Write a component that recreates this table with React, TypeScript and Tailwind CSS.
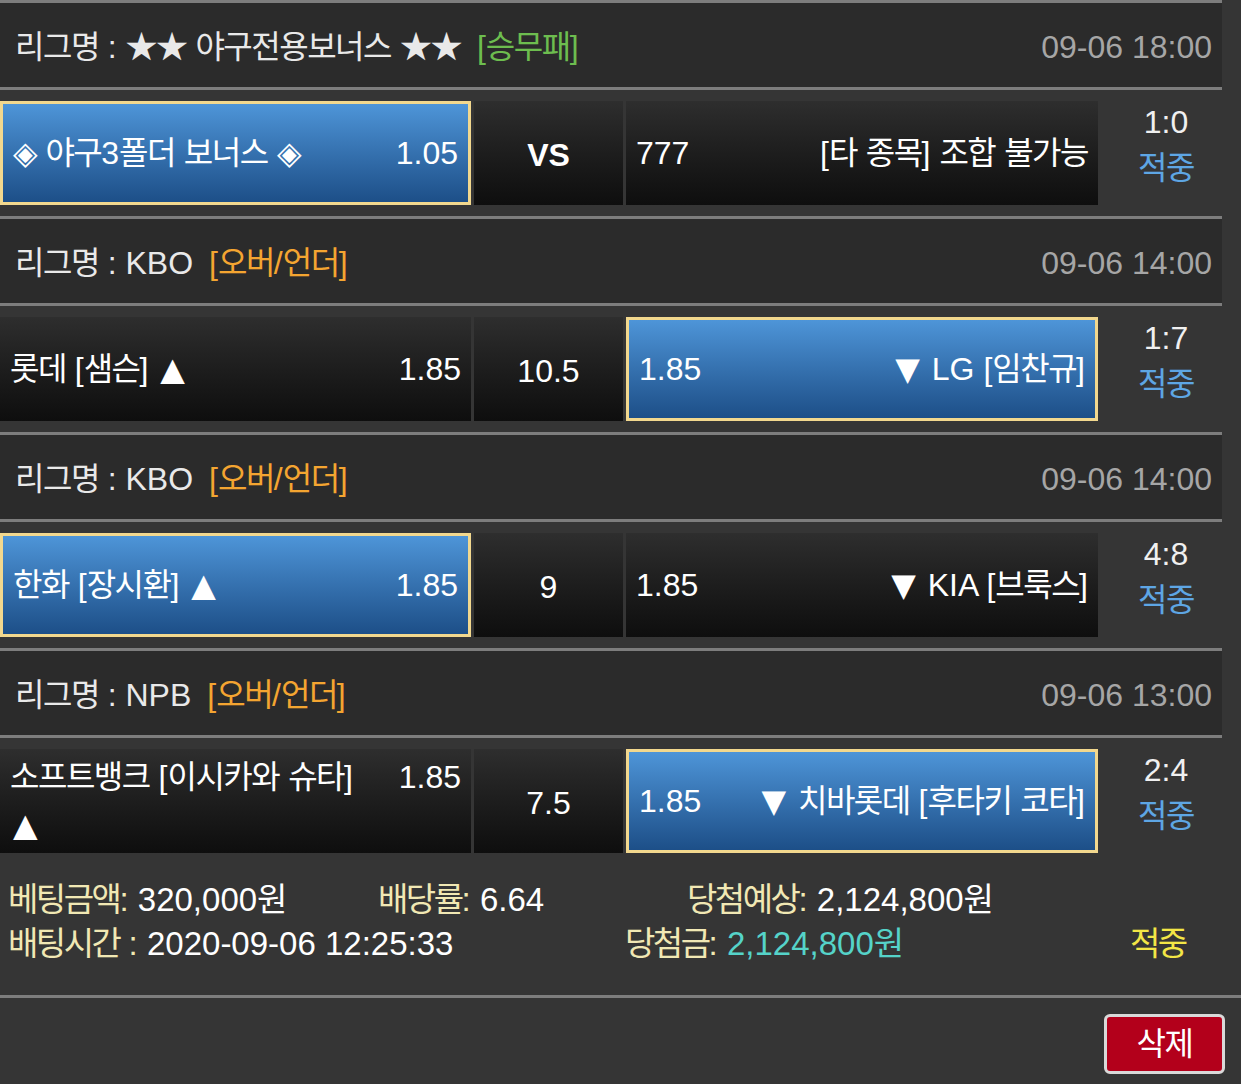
import React from "react";

const SPLIT = /([\uAC00-\uD7A3★◈]+|[▲▼])/;
const HANGUL = /^[\uAC00-\uD7A3★◈]+$/;
const TRI = /^[▲▼]$/;

function K({ t, f = false }: { t: string; f?: boolean }) {
  const parts = t.split(SPLIT);
  return (
    <>
      {parts.map((p, i) =>
        HANGUL.test(p) ? (
          <span key={i} className={f ? "tracking-[-2.5px]" : "tracking-[-1.5px]"}>
            {p}
          </span>
        ) : TRI.test(p) ? (
          <span key={i} className="px-[3px] font-['DejaVu_Sans',sans-serif]">
            {p}
          </span>
        ) : (
          <React.Fragment key={i}>{p}</React.Fragment>
        )
      )}
    </>
  );
}

type Side = { name: string; name2?: string; odds: string; selected?: boolean };
type Match = {
  league: string;
  tag: string;
  tagClass: string;
  tagGap: string;
  date: string;
  left: Side;
  mid: string;
  midBold?: boolean;
  right: Side;
  score: string;
};

const matches: Match[] = [
  {
    league: "리그명 : ★★ 야구전용보너스 ★★",
    tag: "[승무패]",
    tagClass: "text-[#6dbd4f]",
    tagGap: "ml-[16px]",
    date: "09-06 18:00",
    left: { name: "◈ 야구3폴더 보너스 ◈", odds: "1.05", selected: true },
    mid: "VS",
    midBold: true,
    right: { odds: "777", name: "[타 종목] 조합 불가능" },
    score: "1:0",
  },
  {
    league: "리그명 : KBO",
    tag: "[오버/언더]",
    tagClass: "text-[#f4a531]",
    tagGap: "ml-[16px]",
    date: "09-06 14:00",
    left: { name: "롯데 [샘슨] ▲", odds: "1.85" },
    mid: "10.5",
    right: { odds: "1.85", name: "▼ LG [임찬규]", selected: true },
    score: "1:7",
  },
  {
    league: "리그명 : KBO",
    tag: "[오버/언더]",
    tagClass: "text-[#f4a531]",
    tagGap: "ml-[16px]",
    date: "09-06 14:00",
    left: { name: "한화 [장시환] ▲", odds: "1.85", selected: true },
    mid: "9",
    right: { odds: "1.85", name: "▼ KIA [브룩스]" },
    score: "4:8",
  },
  {
    league: "리그명 : NPB",
    tag: "[오버/언더]",
    tagClass: "text-[#f4a531]",
    tagGap: "ml-[16px]",
    date: "09-06 13:00",
    left: { name: "소프트뱅크 [이시카와 슈타]", name2: "▲", odds: "1.85" },
    mid: "7.5",
    right: { odds: "1.85", name: "▼ 치바롯데 [후타키 코타]", selected: true },
    score: "2:4",
  },
];

const darkCell = "bg-linear-to-b from-[#2e2e2e] to-[#0e0e0e]";
const blueCell =
  "bg-linear-to-b from-[#4e95d8] to-[#1d4f88] border-[3px] border-[#f2d88e]";

function MatchBlock({ m, last }: { m: Match; last: boolean }) {
  return (
    <div>
      <div className="flex h-[87px] items-center justify-between bg-[#2b2b2b] pl-[15px] pr-[10px] pt-[3px] border-b-[3px] border-[#7d7d7d]">
        <div className="text-[#e9e9e9]">
          <K t={m.league} />
          <span className={`${m.tagGap} ${m.tagClass}`}>
            <K t={m.tag} />
          </span>
        </div>
        <div className="text-[#a6a6a6]">{m.date}</div>
      </div>
      <div
        className={`flex items-center ${
          last ? "h-[126px]" : "h-[129px] border-b-[3px] border-[#7d7d7d]"
        }`}
      >
        <div className="flex h-[104px] w-[1098px] gap-[3px] text-white">
          <div
            className={`flex w-[471px] items-center px-[10px] ${
              m.left.selected ? blueCell : darkCell
            }`}
          >
            {m.left.name2 ? (
              <div className="flex w-full items-start justify-between leading-[48px]">
                <span>
                  <K t={m.left.name} />
                  <br />
                  <K t={m.left.name2} />
                </span>
                <span>{m.left.odds}</span>
              </div>
            ) : (
              <div className="flex w-full items-center justify-between">
                <span>
                  <K t={m.left.name} />
                </span>
                <span>{m.left.odds}</span>
              </div>
            )}
          </div>
          <div
            className={`flex w-[149px] items-center justify-center ${darkCell} ${
              m.midBold ? "font-bold" : ""
            }`}
          >
            <span className="mt-[4px]">{m.mid}</span>
          </div>
          <div
            className={`flex w-[472px] items-center justify-between px-[10px] ${
              m.right.selected ? blueCell : darkCell
            }`}
          >
            <span>{m.right.odds}</span>
            <span>
              <K t={m.right.name} />
            </span>
          </div>
        </div>
        <div className="flex w-[124px] flex-col items-center pb-[16px] pl-[12px] leading-[46px]">
          <span className="text-[#f0f0f0]">{m.score}</span>
          <span className="text-[#5ea6e4]">
            <K t="적중" />
          </span>
        </div>
      </div>
    </div>
  );
}

export default function App() {
  return (
    <div className="min-h-[1084px] w-[1241px] bg-[#353535] font-['Liberation_Sans','Noto_Sans_CJK_KR',sans-serif] text-[32px] leading-[46px]">
      <div className="w-[1222px] border-t-[3px] border-[#7d7d7d]">
        {matches.map((m, i) => (
          <MatchBlock key={i} m={m} last={i === matches.length - 1} />
        ))}
      </div>
      <div className="flex flex-col pl-[8px] pt-[14px] pb-[29px] text-[33px] leading-[44px] text-white border-b-[3px] border-[#7d7d7d]">
        <div className="flex">
          <span className="w-[370px]">
            <span className="text-[#f1e8b4]">
              <K t="베팅금액:" f />
            </span>{" "}
            320,000<K t="원" f />
          </span>
          <span className="w-[309px]">
            <span className="text-[#f1e8b4]">
              <K t="배당률:" f />
            </span>{" "}
            6.64
          </span>
          <span>
            <span className="text-[#f1e8b4]">
              <K t="당첨예상:" f />
            </span>{" "}
            2,124,800<K t="원" f />
          </span>
        </div>
        <div className="flex">
          <span className="w-[617px]">
            <span className="text-[#f1e8b4]">
              <K t="배팅시간 :" f />
            </span>{" "}
            2020-09-06 12:25:33
          </span>
          <span className="w-[505px]">
            <span className="text-[#f1e8b4]">
              <K t="당첨금:" f />
            </span>{" "}
            <span className="text-[#55d3c9]">
              2,124,800<K t="원" f />
            </span>
          </span>
          <span className="text-[#f3e646]">
            <K t="적중" f />
          </span>
        </div>
      </div>
      <div className="flex justify-end pr-[16px] pt-[16px]">
        <button className="h-[60px] w-[121px] rounded-[6px] border-[3px] border-[#d9d9d9] bg-[#b3001b] text-white leading-none">
          <K t="삭제" />
        </button>
      </div>
    </div>
  );
}
